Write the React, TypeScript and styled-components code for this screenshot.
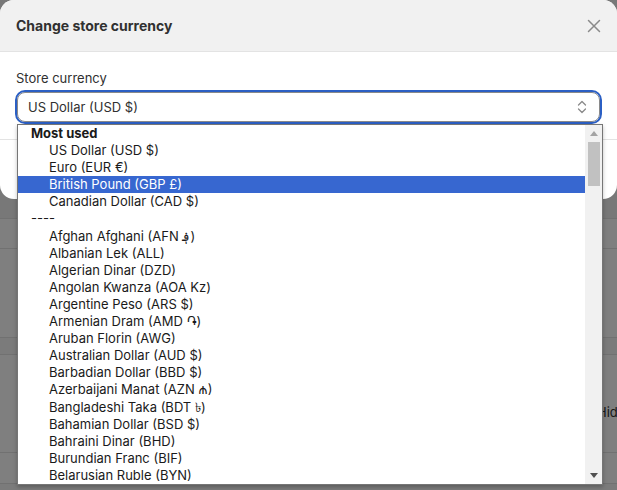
import React from "react";
import styled, { createGlobalStyle } from "styled-components";

const GlobalStyle = createGlobalStyle`
  html, body {
    margin: 0;
    padding: 0;
  }
  body {
    font-family: Inter, "Noto Sans", "DejaVu Sans", sans-serif;
    color: #303030;
  }
`;

const Screen = styled.div`
  position: relative;
  width: 617px;
  height: 490px;
  overflow: hidden;
  background: #f1f1f1;
`;

// the settings page that sits behind the modal
const Page = styled.div`
  display: flex;
  flex-direction: column;
  padding-top: 218px;
`;

const PageRow = styled.div<{ $h: number; $sub?: boolean }>`
  height: ${p => p.$h}px;
  box-sizing: border-box;
  border-top: 1px solid #e3e3e3;
  background: ${p => (p.$sub ? "#f7f7f7" : "#ffffff")};
  display: grid;
  grid-template-columns: 597px auto;
  align-items: start;
  font-size: 13px;
  white-space: nowrap;
`;

const PageText = styled.span`
  margin-top: 49px;
  color: #303030;
`;

const Overlay = styled.div`
  position: absolute;
  inset: 0;
  background: rgba(0, 0, 0, 0.5);
  display: flex;
  flex-direction: column;
`;

const Dialog = styled.div`
  width: 617px;
  background: #fff;
  border-radius: 14px;
  overflow: hidden;
  display: flex;
  flex-direction: column;
`;

const Header = styled.div`
  height: 51px;
  background: #f1f1f1;
  border-bottom: 1px solid #e3e3e3;
  display: flex;
  align-items: center;
  justify-content: space-between;
  padding: 0 16px;
  h2 {
    margin: 0;
    font-size: 14px;
    font-weight: 650;
    color: #303030;
  }
`;

const Body = styled.div`
  padding: 16px 16px 17px 16px;
  display: flex;
  flex-direction: column;
  gap: 4px;
`;

const Label = styled.label`
  font-size: 13px;
  line-height: 20px;
  color: #303030;
`;

const SelectBox = styled.div`
  margin: 0 1px 0 1px;
  height: 30px;
  box-sizing: border-box;
  border: 1px solid #8a8a8a;
  border-radius: 8px;
  outline: 2px solid #2b5fc4;
  outline-offset: 0px;
  display: flex;
  align-items: center;
  justify-content: space-between;
  padding: 0 11px 0 10px;
  font-size: 13px;
  color: #303030;
`;

const Footer = styled.div`
  height: 59px;
  border-top: 1px solid #e3e3e3;
  display: flex;
  align-items: center;
  justify-content: flex-end;
  padding: 0 16px;
  gap: 8px;
`;

const Button = styled.button<{ $primary?: boolean }>`
  height: 28px;
  padding: 0 12px;
  border-radius: 8px;
  border: none;
  font: inherit;
  font-size: 13px;
  font-weight: 550;
  background: ${p => (p.$primary ? "#303030" : "#fff")};
  color: ${p => (p.$primary ? "#fff" : "#303030")};
  box-shadow: 0 0 0 1px #d4d4d4;
`;

// native select popup, lying over the dialog
const Dropdown = styled.div`
  position: absolute;
  left: 17px;
  top: 124px;
  width: 586px;
  height: 361px;
  box-sizing: border-box;
  border: 1px solid #767676;
  background: #fff;
  display: flex;
  box-shadow: 0 2px 4px rgba(0, 0, 0, 0.25);
`;

const List = styled.div`
  flex: 1;
  overflow: hidden;
  display: flex;
  flex-direction: column;
`;

const Row = styled.div<{ $kind: "group" | "option" | "sep"; $selected?: boolean }>`
  height: 17.1px;
  flex-shrink: 0;
  line-height: 17px;
  font-size: 13px;
  white-space: nowrap;
  padding-left: ${p => (p.$kind === "option" ? 31 : 13)}px;
  font-weight: ${p => (p.$kind === "group" ? 700 : 400)};
  color: ${p => (p.$selected ? "#fff" : "#1a1a1a")};
  background: ${p => (p.$selected ? "#3767d0" : "transparent")};
`;

const ScrollTrack = styled.div`
  width: 17px;
  background: #f1f1f1;
  display: flex;
  flex-direction: column;
  align-items: center;
`;

const ArrowBtn = styled.div`
  height: 17px;
  width: 17px;
  display: flex;
  align-items: center;
  justify-content: center;
`;

const Thumb = styled.div`
  width: 12px;
  height: 44px;
  background: #c1c1c1;
`;

const Spacer = styled.div`
  flex: 1;
`;

const options: { label: string; kind: "group" | "option" | "sep"; selected?: boolean }[] = [
  { label: "Most used", kind: "group" },
  { label: "US Dollar (USD $)", kind: "option" },
  { label: "Euro (EUR €)", kind: "option" },
  { label: "British Pound (GBP £)", kind: "option", selected: true },
  { label: "Canadian Dollar (CAD $)", kind: "option" },
  { label: "----", kind: "sep" },
  { label: "Afghan Afghani (AFN ؋)", kind: "option" },
  { label: "Albanian Lek (ALL)", kind: "option" },
  { label: "Algerian Dinar (DZD)", kind: "option" },
  { label: "Angolan Kwanza (AOA Kz)", kind: "option" },
  { label: "Argentine Peso (ARS $)", kind: "option" },
  { label: "Armenian Dram (AMD ֏)", kind: "option" },
  { label: "Aruban Florin (AWG)", kind: "option" },
  { label: "Australian Dollar (AUD $)", kind: "option" },
  { label: "Barbadian Dollar (BBD $)", kind: "option" },
  { label: "Azerbaijani Manat (AZN ₼)", kind: "option" },
  { label: "Bangladeshi Taka (BDT ৳)", kind: "option" },
  { label: "Bahamian Dollar (BSD $)", kind: "option" },
  { label: "Bahraini Dinar (BHD)", kind: "option" },
  { label: "Burundian Franc (BIF)", kind: "option" },
  { label: "Belarusian Ruble (BYN)", kind: "option" },
];

const CloseIcon = () => (
  <svg width="14" height="14" viewBox="0 0 14 14">
    <path d="M1.5 1.5 L12.5 12.5 M12.5 1.5 L1.5 12.5" stroke="#8a8a8a" strokeWidth="1.5" strokeLinecap="round" />
  </svg>
);

const SelectIcon = () => (
  <svg width="12" height="16" viewBox="0 0 12 16">
    <path d="M2.5 6 L6 2.5 L9.5 6 M2.5 10 L6 13.5 L9.5 10" fill="none" stroke="#8a8a8a" strokeWidth="1.3" strokeLinecap="round" strokeLinejoin="round" />
  </svg>
);

const Tri = ({ up, color }: { up?: boolean; color: string }) => (
  <svg width="8" height="5" viewBox="0 0 8 5">
    <path d={up ? "M0 5 L4 0 L8 5 Z" : "M0 0 L4 5 L8 0 Z"} fill={color} />
  </svg>
);

export default function App() {
  return (
    <Screen>
      <GlobalStyle />
      <Page>
        <PageRow $h={30}><span /></PageRow>
        <PageRow $h={89}><span /></PageRow>
        <PageRow $h={17} $sub><span /></PageRow>
        <PageRow $h={98}><span /><PageText>Hide</PageText></PageRow>
        <PageRow $h={31}><span /></PageRow>
        <PageRow $h={30} $sub><span /></PageRow>
      </Page>
      <Overlay>
        <Dialog>
          <Header>
            <h2>Change store currency</h2>
            <CloseIcon />
          </Header>
          <Body>
            <Label>Store currency</Label>
            <SelectBox>
              <span>US Dollar (USD $)</span>
              <SelectIcon />
            </SelectBox>
          </Body>
          <Footer>
            <Button>Cancel</Button>
            <Button $primary>Save</Button>
          </Footer>
        </Dialog>
      </Overlay>
      <Dropdown>
        <List>
          {options.map(o => (
            <Row key={o.label} $kind={o.kind} $selected={o.selected}>
              {o.label}
            </Row>
          ))}
        </List>
        <ScrollTrack>
          <ArrowBtn><Tri up color="#a3a3a3" /></ArrowBtn>
          <Thumb />
          <Spacer />
          <ArrowBtn><Tri color="#505050" /></ArrowBtn>
        </ScrollTrack>
      </Dropdown>
    </Screen>
  );
}
